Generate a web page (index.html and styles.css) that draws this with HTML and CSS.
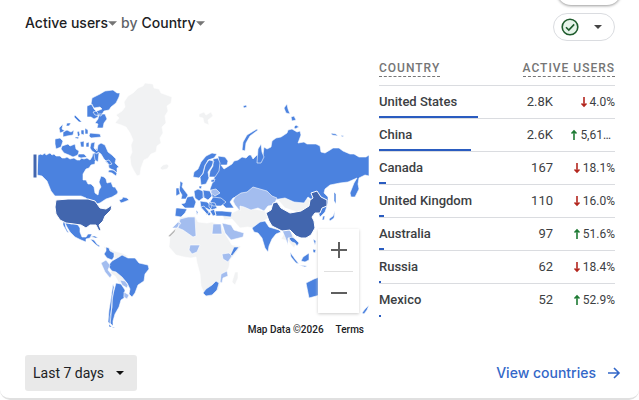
FILE: index.html
```html
<!DOCTYPE html>
<html lang="en">
<head>
<meta charset="utf-8">
<meta name="viewport" content="width=device-width, initial-scale=1">
<title>Active users by Country</title>
<link rel="stylesheet" href="styles.css">
</head>
<body>
<svg class="defs" aria-hidden="true">
  <symbol id="down" viewBox="0 0 8 12"><path d="M4 1v9M1.5 7.5L4 10l2.500-2.500" fill="none" stroke="currentColor" stroke-width="1.6"/></symbol>
  <symbol id="up" viewBox="0 0 8 12"><path d="M4 11V2M1.500 4.500L4 2l2.500 2.500" fill="none" stroke="currentColor" stroke-width="1.6"/></symbol>
  <symbol id="caret" viewBox="0 0 10 5"><path d="M0 0h10L5 5z" fill="currentColor"/></symbol>
</svg>
<div class="previous"></div>
<main class="card">
  <header class="top">
    <h1 class="title">
      <button class="pick" type="button">Active users<svg><use href="#caret"/></svg></button>
      <span class="by">by</span>
      <button class="pick" type="button">Country<svg><use href="#caret"/></svg></button>
    </h1>
    <button class="status" type="button" aria-label="Data quality">
      <svg class="check" viewBox="0 0 18 18"><circle cx="9" cy="9" r="7.8"/><path d="M5 9.2l2.8 2.8 5.4-5.6"/></svg>
      <svg class="caret"><use href="#caret"/></svg>
    </button>
  </header>
  <div class="body">
    <section class="map">
      <svg class="world" viewBox="25 60 345 269" role="img" aria-label="World map">
        <g class="none">
          <path d="M138 88l5-2 2-3 8 1 1 4 5 1 2 4 11 4-1 6-4 3 1 5-3 5 1 7-4 4 1 6-3 5 1 5-4 3-1 6-5 2-3 4-4 2-3 8-1 7-3 1-3-5-3-6-1-8 2-5-1-7 2-5-3-7-4-6-5-2-6-2 4-5-3-3 6-4 3-4-1-5 4-6 5-3z"/>
          <path d="M163 165l4-1 2 2-2 3-5 1-2-2zM199 114l5-2 2 3 5-3 2 4-5 4 1 5-5-2-1-5-4-1z"/>
          <path d="M180 217l15-1 3 6 9 1 5-1 9 3 5 10 6 10 9 1-5 7-6 7-1 7-3 7-5 6-2 9-7 7-6 1-5-11-1-12-3-11-1-6-5 1-7-1-8-2-7-8 1-11 6-10z"/>
          <path d="M222 212l8 2 8-4 3-8 8 6 16 3 3 7-7 5-4 6-9-2-8 1-8-9-8 1zM278 200l6-4 8 2 6-3 13 5 2 5-8 5-8 2-12-4z"/>
          <path d="M235 272l3 0 0 6-3 7-3-3zM113 269l8 5 4 5-1 3-5 1-4-7-5-3zM103 246l6 2 5 3 8 2 6 3-8 4-9-3zM88 234l7 2-2 3zM281 239l4-7 8 2 4 8-3 6-6-7z"/>
        </g>
        <g class="mid">
          <!-- North America -->
          <path d="M38 155l3-1 1 1 3-2 1 2 4-2 2 2 2-1 2 2 4 0 2 2 3 0 2-1 3 2 4-1 3 2 3 0 1-2 3 1 3-1 3 2 2-3 1-4 3 2 0 2 2 2-3 2 0 3-4 1-2 3-3 1-3 5 0 6 3 0 2 4 3 0 3 3 1 6 3 2 1-5 2-3-2-5 2-6 3 1 2 2 1 4 4-1 2 5 2 0 3 5-1 2-5 3-6 2-6 4-7 2-4-2-3-5-5-2H55l-4-5-4-10-5-5-5-1z"/>
          <path d="M119 200l3-1 1-2 4 1 2 2-5 2-3 1zM63 222l3-1 5 3 4-1 3 2 2 3 0 4 2 5 4 0 2-3 4 0-2 4-4 1 0 3-5-2-6-3-5-5-3-5-2-4 1 5 3 5-2-1-4-7zM90 239l4 1 3 4 3 2-1 1-4-3zM91 236l4 0 3 2-3 0z"/>
          <path d="M92 98l8-4 5-3 8-1 4 3 3 0-1 4-3 6-5 4-2 3-5 1-3 5-6-1-2-3 4-1 5-2-2-2-6 1-3-4zM87 106l5-2 2 5 4 4 0 4-4 2-3-2-4 0 0-6zM99 114l6 0 2 5-3 4-1 5-6 0 1-4-3-1 3-4zM90 133l10 1 1 3-10 1-2-2zM75 115l4 4 3 3-3 0-5-5zM67 123l4 0-2 3-3 0zM59 128l4-4-1 5 3 2-5 2zM63 132l4-2 4 2 3-2-1 5-6 1-4 1zM77 132l2-1 1 4-2 2zM81 130l3 0 0 5-3-1zM85 128l3 2 0 4-3 0zM55 139l5-1 3 3-2 6-5 2-1-5zM62 146l6-2 2 2 5-2 1 5 3 2-1 4-5 2-4-2-5-2-3-4zM80 142l4-1 0 6-3 0zM86 143l3-1 0 5-3 0zM75 137h4l-1 2-3-1zM78 154h6l3 3-6 1-3-1zM96 148l3 5-1 9-3-2-1-6z"/>
          <path d="M91 143l4-1-1 6 3 3 1-6 3-2 4 2 3 7 4 3 4 4-1 4 4 4-2 1 0 5-4-3-4-2-1-5-4-4-3-5-3-2-1 2-5-3-2-3zM105 161l4-1 3 4-3 1zM109 170l5 0 3 3-1 3-4-3-4-1z"/>
          <!-- South America -->
          <path d="M106 247l3 1 1 3 4 2 0 4-2 3-5-2-3-4 2-3zM112 261l7-4 3-2 6 3 7 0 4 5 9 2 1 4-4 5-1 7-6 4-3 8-3 4-3-3 1-5-3-6-5-6-6-5-4-1-4-5zM116 283l5 1 4 6-1 8-3 2-2 7-4 7-2 7 0 5-3-3 0-6 2-10 0-9zM113 284l1 3-2 15-1 14-1 8-2-2 1-12 2-12zM109 324l3 3-3 0zM112 327l3 0-2 1z"/>
          <!-- Russia -->
          <path d="M218 156l7 1 3 4-1 4-6 0 3 4 8-5 2-3 4-1 4-3 4 1 3-3 2 0 2 4 4-4 6 0 1-8 3 2 4-2 1-6 4-3 5-1 6-4 1-3 4-1 5 3 3-1 1 4-3 8 6-1 3 2 9 0 4 2 1 6 4 1 5-3 3-2 6 0 4 3 7 3 4 0 5 3 7 0 3-2v21l-4-1-6 3-1 6 1 5-4 8-4 0-1-4 4-10 3-5-9 4-8 1-10 2-5 4-1 4 4 4 0 6-3 9-5 5-3-8-5-9-4-3-4 6-10-1-9-4-12 2-10-5-10-5-11 5-9 3-3 4 4 6-8 0-5-5-8-4-3-10 3-8 3-9 3-5z"/>
          <path d="M242 150l1-8 4-7 10-6 1 1-8 6-4 7-1 8zM257 163l1-14 3-5 1 8 2 5-3 6zM284 108l3-4 1 5 2 5-4-1zM291 117l3-1 2 4-4 1zM294 127l2-2 3 2-4 2zM331 133l5 1 2 2-6-1zM341 135l3 1-2 1zM235 109l2-2M243 106l3-1 1 2-3 1z"/>
          <path d="M334 192l2 2 0 10-2-3z"/>
          <!-- Europe -->
          <path d="M201 162l5-6 6-3 5 1-3 4-6 2-3 6-2 8-4 4-6-1 1-5 4-3zM209 160l5 1-2 5-4 6 1 6-3 6-5 1-1-8 3-4 2-8zM213 159l5-1 2 5-1 8-4 6-6 0 1-6 3-5zM211 180l4-1-1 3-3 0zM180 181l3 2-1 4 3 4 3 4-2 4-5 0 1-4-3-5 1-5zM176 188l3 0 1 6-4 2zM187 197l6-1 3 6-2 6-9 0-4-4 4-1zM194 191l4-2 5 2 1 6-5 4-4-3zM203 190l7 1 2 5-4 4-5-3zM200 201l7 1 5 4-2 4-4-2 5 6-2 2-8-8zM213 197l8 1 5 4-5 4-8 0-3-4zM209 202l6 1 2 5-5 2-3-3zM178 208l9 1-2 4-4 4-6-1 1-8zM215 211l7 0 10 1-1 5-9-1-6 0zM210 211l4-2 2 6-3 1zM201 207l3-1 5 6-2 3-2-3zM196 210l2 2-1 3zM199 186l3 0-1 3-2-1z"/>
          <!-- Asia, Africa and Oceania -->
          <path d="M252 228l8-6 5-1 4 6 10 3 2 2-5 2-4 5-3 7-1 6-3-4-3-10-4-5-4-1zM234 247l5 0-7 9-2 0zM206 289l6-4 4-4 3 2-2 7-5 5-6 1-3-3zM288 235l3 1 4 3 4 4-2 3-2-3-3-1-2-2zM290 252l5 7 4 5-3-1-5-6zM303 257l6-4 0 7-4 2-4-1zM313 249l3 1-1 3-2-1zM299 265l8 1-2 1z"/>
          <path d="M323 216l2 0-1 4-2 0zM329 219l4-3 2-5-1 7-4 3zM313 239l3 2-1 4zM306 283l8-4 8-3 14 3v17l-16-1-11 3zM362 313l3-4 4-4-2 5-3 4z"/>
        </g>
        <g class="light">
          <path d="M235 197l6-4 6-1 6-5 7 2 7 2 5 5 5 2-3 7-6 1-4 5-6-3-7 2-7-3-4-1 0 5-5-6-2-4zM101 263l5-3 4 5-2 5 4 5-2 3-5-6zM120 280l5 1 3 4-1 3-5-3zM124 292l5 3-2 4-3-2zM180 219l8-2 7 0 1 19-3 1-10-7-5-2zM172 228l6-6 3 1-4 5zM213 224l8 0 1 10h-10zM222 223l9 2 3 5 10 3-1 4-12 3-6-7zM190 245l10 0-3 7-5 2-3-4zM222 254l7-1 3 3-4 6-5-3zM221 274l6-3 1 5-5 2-1 5-2-1zM211 190l5-1 4 4-5 3-4-3zM282 230l5-3 4 5 2 5-5 1 0 7-3-8z"/>
        </g>
        <path class="gray" d="M168 236l5-5 3-3-1 4-5 5z"/>
        <g class="dark">
          <path d="M33 154h4v24h-4zM56 200l12-1 20 0 7 2 5 7 6 1 6-4-1 5-6 6-2 5-4 4 2 5-2 1-3-6-6 0-4 3-5-3-7-1-8-1-6-3-4-6-1-7z"/>
          <path d="M266 213l5-3 2-7 4-1 4 6 9 5 11-2 8-5 1-6 3-2-2-5 6-2 4 6 6 3 0 6-5 2-2 5-5 0-3 4 2 4 1 7-4 7-5 3-5 0-5-2-6-6-8 1-10-5-3-5z"/>
        </g>
      </svg>
      <div class="zoom">
        <button type="button" aria-label="Zoom in"><svg viewBox="0 0 18 18"><path d="M9 1v16M1 9h16"/></svg></button>
        <button type="button" aria-label="Zoom out"><svg viewBox="0 0 18 18"><path d="M1 9h16"/></svg></button>
      </div>
      <div class="credit"><span>Map Data ©2026</span><a href="#">Terms</a></div>
    </section>
    <table class="data">
      <thead><tr><th scope="col"><span>COUNTRY</span></th><th class="users" scope="col" colspan="2"><span>ACTIVE USERS</span></th></tr></thead>
      <tbody>
        <tr><th scope="row">United States<i class="bar" style="width:42%"></i></th><td>2.8K</td><td><span class="change loss"><svg><use href="#down"/></svg>4.0%</span></td></tr>
        <tr><th scope="row">China<i class="bar" style="width:39%"></i></th><td>2.6K</td><td><span class="change gain cut"><svg><use href="#up"/></svg>5,61…</span></td></tr>
        <tr><th scope="row">Canada<i class="bar" style="width:3%"></i></th><td>167</td><td><span class="change loss"><svg><use href="#down"/></svg>18.1%</span></td></tr>
        <tr><th scope="row">United Kingdom<i class="bar" style="width:2%"></i></th><td>110</td><td><span class="change loss"><svg><use href="#down"/></svg>16.0%</span></td></tr>
        <tr><th scope="row">Australia<i class="bar" style="width:2%"></i></th><td>97</td><td><span class="change gain"><svg><use href="#up"/></svg>51.6%</span></td></tr>
        <tr><th scope="row">Russia<i class="bar" style="width:1%"></i></th><td>62</td><td><span class="change loss"><svg><use href="#down"/></svg>18.4%</span></td></tr>
        <tr><th scope="row">Mexico<i class="bar" style="width:1%"></i></th><td>52</td><td><span class="change gain"><svg><use href="#up"/></svg>52.9%</span></td></tr>
      </tbody>
    </table>
  </div>
  <footer class="foot">
    <div class="range">
      <select aria-label="Date range"><option>Last 7 days</option></select>
      <svg class="caret"><use href="#caret"/></svg>
    </div>
    <a class="more" href="#">View countries <svg viewBox="0 0 14 14"><path d="M1 7h11M7 2l5 5-5 5"/></svg></a>
  </footer>
</main>
</body>
</html>
```
FILE: styles.css
```css
* { box-sizing: border-box; }
body {
  margin: 0;
  overflow: hidden;
  background: #fff;
  color: #3c4043;
  font: 14px/20px Roboto, sans-serif;
}
button, select { margin: 0; padding: 0; border: 0; background: none; color: inherit; font: inherit; }
a { text-decoration: none; }
.defs { position: absolute; width: 0; height: 0; }
.previous {
  position: absolute;
  top: -24px;
  right: 18px;
  width: 64px;
  height: 29px;
  border-radius: 14px;
  background: #fff;
  box-shadow: 0 1px 3px #9a9a9a;
}
.card {
  padding: 13px 24px 7px 25px;
  border-bottom: 2px solid #e0e0e0;
  border-radius: 0 0 10px 10px;
}
.top { display: flex; align-items: center; justify-content: space-between; height: 28px; }
.title {
  display: flex;
  gap: 4px;
  margin: 0 0 8px;
  font: 500 14px/20px Inter, sans-serif;
}
.pick { display: flex; align-items: center; color: #202124; }
.pick svg { width: 9px; height: 5px; color: #757575; }
.by { color: #5f6368; }
.status {
  display: flex;
  align-items: center;
  justify-content: space-between;
  width: 62px;
  height: 28px;
  padding: 0 12px 0 7px;
  border: 1px solid #dadce0;
  border-radius: 14px;
}
.check { width: 18px; height: 18px; fill: #e6f4ea; stroke: #1e5b2c; stroke-width: 1.6; }
.caret { width: 8px; height: 4px; color: #444; }
.body {
  display: grid;
  grid-template-columns: minmax(0, 345fr) minmax(0, 236fr);
  gap: 9px;
  align-items: start;
  margin-top: 19px;
}
.map { position: relative; }
.world { display: block; width: 100%; stroke: #fff; stroke-width: 0.6; stroke-linejoin: round; }
.none { fill: #f1f2f3; }
.mid { fill: #4b82df; }
.light { fill: #a3bdef; }
.gray { fill: #bdbdbd; }
.dark { fill: #4266ae; stroke-width: 1; }
.zoom {
  position: absolute;
  right: 11px;
  bottom: 29px;
  width: 41px;
  padding: 0 6px;
  background: #fff;
  box-shadow: 0 1px 3px #ccc;
}
.zoom button { display: grid; place-items: center; width: 100%; height: 42px; }
.zoom button + button { border-top: 1px solid #e0e0e0; }
.zoom svg { width: 18px; height: 18px; stroke: #5f5f5f; stroke-width: 2; }
.credit {
  position: relative;
  display: flex;
  justify-content: flex-end;
  gap: 12px;
  margin-top: -11px;
  padding-right: 6px;
  font-size: 10px;
  font-weight: 500;
  line-height: 24px;
  color: #202124;
}
.credit a { color: inherit; }
.data { width: 100%; border-collapse: collapse; }
.data tr { position: relative; height: 33px; border-bottom: 1px solid #dadce0; }
.data thead tr { height: 25px; }
.data tbody tr:last-child { border-bottom: 0; }
.data th, .data td { padding: 0; text-align: right; vertical-align: middle; font-size: 13px; }
.data th:first-child { text-align: left; }
.data tbody th { font-weight: 500; }
.data td:nth-child(2) { width: 48px; }
.data td:nth-child(3) { width: 62px; }
.data thead th { vertical-align: top; font-size: 12px; font-weight: 500; line-height: 16px; letter-spacing: 1px; color: #757575; }
.data thead span { display: inline-block; border-bottom: 1px dashed #757575; }
.bar { position: absolute; left: 0; bottom: -1px; height: 2px; background: #2a5cc0; }
.change { display: flex; align-items: center; justify-content: flex-end; gap: 2px; font-size: 12px; }
.change svg { width: 8px; height: 12px; }
.cut { padding-right: 4px; }
.loss svg { color: #b3261e; }
.gain svg { color: #1e7b34; }
.foot { display: flex; align-items: center; justify-content: space-between; margin: 13px -6px 0 0; }
.range { position: relative; }
.range select {
  appearance: none;
  width: 112px;
  height: 36px;
  padding: 0 8px;
  border-radius: 3px;
  background: #e9e9e9;
  color: #202124;
}
.range .caret { position: absolute; top: 16px; right: 13px; color: #111; pointer-events: none; }
.more { display: flex; align-items: center; gap: 11px; font: 500 14px/20px Inter, sans-serif; color: #3367c8; }
.more svg { width: 14px; height: 14px; fill: none; stroke: currentColor; stroke-width: 1.6; }
```
